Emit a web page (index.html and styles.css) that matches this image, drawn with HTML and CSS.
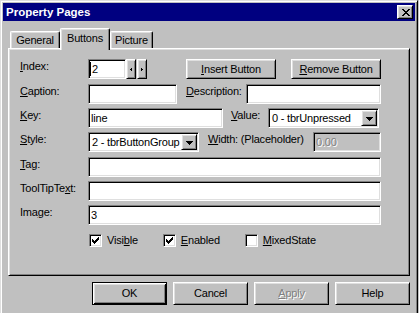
FILE: index.html
```html
<!DOCTYPE html>
<html>
<head>
<meta charset="utf-8">
<title>Property Pages</title>
<link rel="stylesheet" href="styles.css">
</head>
<body>
<div class="window">
  <div class="titlebar">
    <span class="title">Property Pages</span>
    <span class="close">
      <svg width="8" height="7" viewBox="0 0 8 7" shape-rendering="crispEdges"><path fill="#000" d="M0 0h2v1H0z M6 0h2v1H6z M1 1h2v1H1z M5 1h2v1H5z M2 2h4v1H2z M3 3h2v1H3z M2 4h4v1H2z M1 5h2v1H1z M5 5h2v1H5z M0 6h2v1H0z M6 6h2v1H6z"/></svg>
    </span>
  </div>
  <div class="content">
    <div class="tabs">
      <div class="tab tab-general">General</div>
      <div class="tab tab-buttons active">Buttons</div>
      <div class="tab tab-picture">Picture</div>
    </div>
    <div class="panel">
      <div class="form">
        <div class="label"><u>I</u>ndex:</div>
        <div class="line">
          <div class="field w-index"><span class="caret"></span>2</div>
          <div class="spin">
            <div class="spin-btn"><svg width="2" height="3" viewBox="0 0 2 3" shape-rendering="crispEdges"><path fill="#000" d="M1 0h1v3H1z M0 1h1v1H0z"/></svg></div>
            <div class="spin-btn"><svg width="2" height="3" viewBox="0 0 2 3" shape-rendering="crispEdges"><path fill="#000" d="M0 0h1v3H0z M1 1h1v1H1z"/></svg></div>
          </div>
          <div class="btn btn-wide btn-insert"><span><u>I</u>nsert Button</span></div>
          <div class="btn btn-wide btn-remove"><span><u>R</u>emove Button</span></div>
        </div>

        <div class="label"><u>C</u>aption:</div>
        <div class="line">
          <div class="field w-caption"></div>
          <div class="label inline-label l-desc"><u>D</u>escription:</div>
          <div class="field grow"></div>
        </div>

        <div class="label"><u>K</u>ey:</div>
        <div class="line">
          <div class="field w-key">line</div>
          <div class="label inline-label l-value"><u>V</u>alue:</div>
          <div class="combo grow combo-value">
            <span class="combo-text">0 - tbrUnpressed</span>
            <span class="combo-btn"><svg width="7" height="4" viewBox="0 0 7 4" shape-rendering="crispEdges"><path fill="#000" d="M0 0h7v1H0z M1 1h5v1H1z M2 2h3v1H2z M3 3h1v1H3z"/></svg></span>
          </div>
        </div>

        <div class="label"><u>S</u>tyle:</div>
        <div class="line">
          <div class="combo w-style">
            <span class="combo-text">2 - tbrButtonGroup</span>
            <span class="combo-btn"><svg width="7" height="4" viewBox="0 0 7 4" shape-rendering="crispEdges"><path fill="#000" d="M0 0h7v1H0z M1 1h5v1H1z M2 2h3v1H2z M3 3h1v1H3z"/></svg></span>
          </div>
          <div class="label inline-label l-width"><u>W</u>idth: (Placeholder)</div>
          <div class="field grow disabled"><span class="dis-text">0.00</span></div>
        </div>

        <div class="label"><u>T</u>ag:</div>
        <div class="line"><div class="field grow"></div></div>

        <div class="label">ToolTipTe<u>x</u>t:</div>
        <div class="line"><div class="field grow"></div></div>

        <div class="label">Ima<u>g</u>e:</div>
        <div class="line"><div class="field grow">3</div></div>

        <div class="label"></div>
        <div class="line checks">
          <div class="check">
            <span class="box"><svg width="7" height="7" viewBox="0 0 7 7" shape-rendering="crispEdges"><path fill="#000" d="M6 0h1v1H6z M5 1h2v1H5z M0 2h1v1H0z M4 2h3v1H4z M0 3h2v1H0z M3 3h3v1H3z M0 4h5v1H0z M1 5h3v1H1z M2 6h1v1H2z"/></svg></span>
            <span>Visi<u>b</u>le</span>
          </div>
          <div class="check">
            <span class="box"><svg width="7" height="7" viewBox="0 0 7 7" shape-rendering="crispEdges"><path fill="#000" d="M6 0h1v1H6z M5 1h2v1H5z M0 2h1v1H0z M4 2h3v1H4z M0 3h2v1H0z M3 3h3v1H3z M0 4h5v1H0z M1 5h3v1H1z M2 6h1v1H2z"/></svg></span>
            <span><u>E</u>nabled</span>
          </div>
          <div class="check">
            <span class="box"></span>
            <span><u>M</u>ixedState</span>
          </div>
        </div>
      </div>
    </div>
    <div class="actions">
      <div class="btn btn-action default"><span>OK</span></div>
      <div class="btn btn-action"><span>Cancel</span></div>
      <div class="btn btn-action"><span class="dis-text"><u>A</u>pply</span></div>
      <div class="btn btn-action"><span>Help</span></div>
    </div>
  </div>
</div>
</body>
</html>
```

FILE: styles.css
```css
* { box-sizing: border-box; }

html, body {
  margin: 0;
  padding: 0;
  background: #c0c0c0;
  overflow: hidden;
}

body {
  width: 419px;
  height: 313px;
  font-family: "Liberation Sans", Arial, sans-serif;
  font-size: 11px;
  line-height: 13px;
  letter-spacing: -0.2px;
  color: #000;
}

u { text-decoration: underline; text-underline-offset: 1px; }

.window {
  width: 418px;
  height: 322px;
  background: #c0c0c0;
  border: 1px solid;
  border-color: #dfdfdf #000 #000 #dfdfdf;
  box-shadow: inset 1px 1px #fff, inset -1px -1px #808080;
  padding: 2px;
  display: flex;
  flex-direction: column;
}

.titlebar {
  height: 18px;
  background: #000080;
  color: #fff;
  display: flex;
  align-items: center;
  justify-content: space-between;
  padding: 0 2px 0 3px;
}

.title {
  font-weight: bold;
  font-size: 11.5px;
  letter-spacing: 0;
}

.close {
  width: 16px;
  height: 14px;
  background: #c0c0c0;
  border: 1px solid;
  border-color: #fff #000 #000 #fff;
  box-shadow: inset 1px 1px #dfdfdf, inset -1px -1px #808080;
  display: flex;
  align-items: center;
  justify-content: center;
  padding-left: 1px;
}

.close svg, .spin-btn svg, .combo-btn svg, .box svg { display: block; }

.content {
  padding: 7px 5px 0 5px;
  display: flex;
  flex-direction: column;
}

.tabs {
  display: flex;
  align-items: flex-end;
  height: 20px;
  padding-left: 2px;
  position: relative;
  z-index: 1;
}

.tab {
  height: 17px;
  padding-top: 2px;
  text-align: center;
  background: #c0c0c0;
  border-top: 1px solid #fff;
  border-left: 1px solid #fff;
  border-right: 1px solid #000;
  border-radius: 2px 2px 0 0;
  box-shadow: inset -1px 0 #808080, inset 1px 1px #dfdfdf;
}

.tab-general { width: 50px; }
.tab-buttons { width: 50px; }
.tab-picture { width: 43px; }

.tab.active {
  height: 22px;
  padding-top: 3px;
  margin-bottom: -2px;
}

.panel {
  height: 228px;
  border: 1px solid;
  border-color: #fff #000 #000 #fff;
  box-shadow: inset 1px 1px #dfdfdf, inset -1px -1px #808080;
  padding: 10px 28px 0 11px;
}

.form {
  display: grid;
  grid-template-columns: 68px 1fr;
  grid-template-rows: 25px 24px 24px 25px 24px 24px 25px 20px;
  align-items: start;
}

.label {
  padding-top: 1px;
  white-space: nowrap;
}

.line {
  display: flex;
  align-items: flex-start;
  height: 20px;
}

.inline-label { flex: none; }
.l-desc { margin-left: 9px; width: 60px; }
.l-value { margin-left: 8px; width: 37px; }
.l-width { margin-left: 9px; width: 105px; }

.field {
  height: 20px;
  background: #fff;
  border: 1px solid;
  border-color: #808080 #fff #fff #808080;
  box-shadow: inset 1px 1px #000, inset -1px -1px #dfdfdf;
  padding: 0 2px;
  display: flex;
  align-items: center;
  white-space: nowrap;
  flex: none;
}

.field.grow, .combo.grow { flex: 1; }

.field.disabled { background: #c0c0c0; }

.w-index { width: 38px; padding-left: 1px; }
.w-caption { width: 89px; }
.w-key { width: 135px; }
.w-style { width: 111px; }

.caret {
  display: inline-block;
  width: 1px;
  height: 14px;
  background: #000;
  margin-right: 1px;
}

.dis-text {
  color: #808080;
  text-shadow: 1px 1px #fff;
}

.spin {
  display: flex;
  gap: 1px;
  flex: none;
}

.spin-btn {
  width: 10px;
  height: 20px;
  background: #c0c0c0;
  border: 1px solid;
  border-color: #fff #000 #000 #fff;
  box-shadow: inset 1px 1px #dfdfdf, inset -1px -1px #808080;
  display: flex;
  align-items: center;
  justify-content: center;
}

.btn {
  background: #c0c0c0;
  border: 1px solid;
  border-color: #fff #000 #000 #fff;
  box-shadow: inset 1px 1px #dfdfdf, inset -1px -1px #808080;
  display: flex;
  align-items: center;
  justify-content: center;
  white-space: nowrap;
  flex: none;
}

.btn-wide { width: 90px; height: 20px; }
.btn-insert { margin-left: 39px; }
.btn-remove { margin-left: auto; }

.combo {
  height: 20px;
  background: #fff;
  border: 1px solid;
  border-color: #808080 #fff #fff #808080;
  box-shadow: inset 1px 1px #000, inset -1px -1px #dfdfdf;
  padding: 1px;
  display: flex;
  flex: none;
}

.combo-value { margin-right: 2px; }

.combo-text {
  flex: 1;
  padding-left: 2px;
  display: flex;
  align-items: center;
  white-space: nowrap;
  overflow: hidden;
}

.combo-btn {
  width: 16px;
  flex: none;
  background: #c0c0c0;
  border: 1px solid;
  border-color: #fff #000 #000 #fff;
  box-shadow: inset 1px 1px #dfdfdf, inset -1px -1px #808080;
  display: flex;
  align-items: center;
  justify-content: center;
  padding-top: 1px;
}

.checks {
  align-items: center;
  gap: 25px;
  padding-left: 1px;
}

.check {
  display: flex;
  align-items: center;
  gap: 5px;
}

.box {
  width: 13px;
  height: 13px;
  background: #fff;
  border: 1px solid;
  border-color: #808080 #fff #fff #808080;
  box-shadow: inset 1px 1px #000, inset -1px -1px #dfdfdf;
  display: flex;
  align-items: center;
  justify-content: center;
}

.actions {
  display: flex;
  justify-content: flex-end;
  gap: 6px;
  margin-top: 6px;
}

.btn-action { width: 75px; height: 23px; }

.btn.default {
  border: 1px solid #000;
  box-shadow: inset 1px 1px #fff, inset -1px -1px #000, inset 2px 2px #dfdfdf, inset -2px -2px #808080;
}
```
